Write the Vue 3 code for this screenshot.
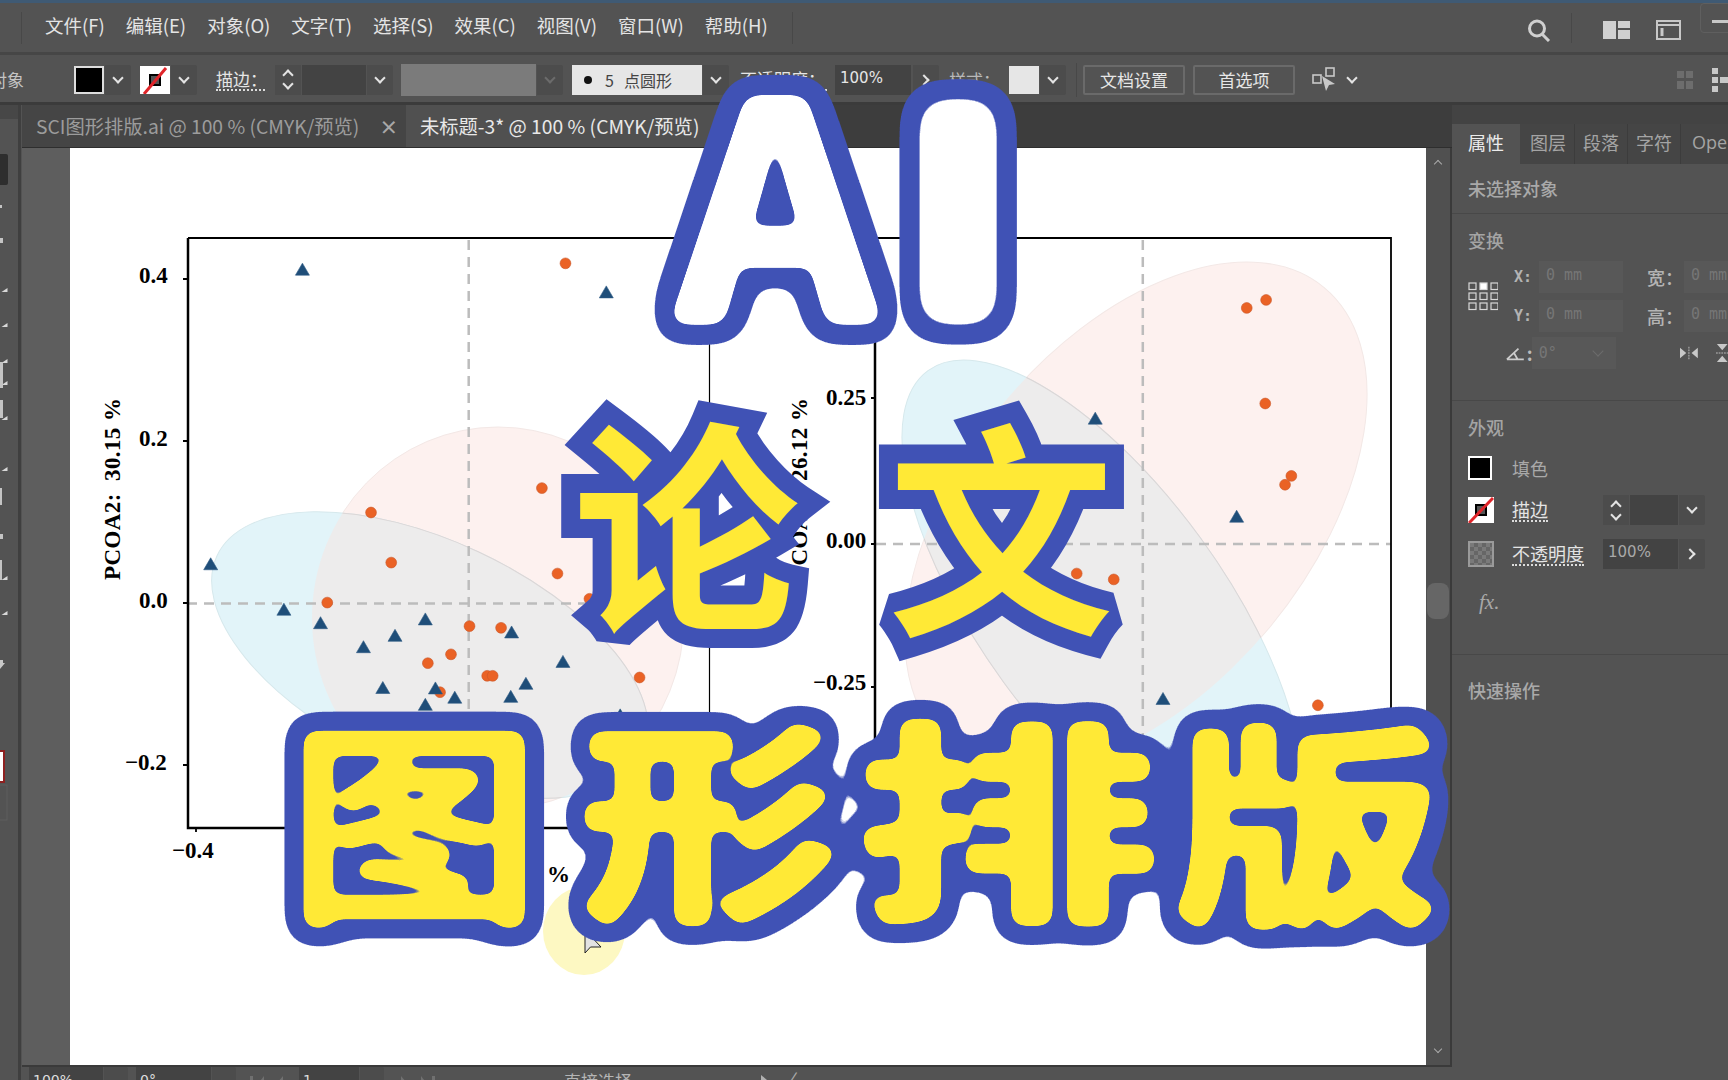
<template>
  <div class="app">
    <div class="top-line"></div>

    <header class="menubar">
      <span class="vsep first"></span>
      <nav class="menu">
        <span v-for="m in menus" :key="m">{{ m }}</span>
      </nav>
      <span class="vsep"></span>
      <div class="spacer"></div>
      <svg class="ico-search" width="26" height="23" viewBox="0 0 26 23">
        <circle cx="11" cy="9.5" r="7.5" fill="none" stroke="#d0d0d0" stroke-width="3" />
        <path d="M16 15l7 7" stroke="#d0d0d0" stroke-width="3" />
      </svg>
      <span class="vsep short"></span>
      <svg class="ico-layout" width="27" height="18" viewBox="0 0 27 18">
        <path d="M0 0h13v18H0zM15 0h12v7H15zM15 9h12v9H15z" fill="#d0d0d0" />
      </svg>
      <svg class="ico-panel" width="25" height="20" viewBox="0 0 25 20">
        <rect x="1" y="1" width="23" height="18" fill="none" stroke="#c8c8c8" stroke-width="2" />
        <path d="M1 5h23" stroke="#c8c8c8" stroke-width="2" />
        <path d="M6 8v8" stroke="#c8c8c8" stroke-width="3" />
      </svg>
      <div class="win-btn"><i></i></div>
    </header>

    <div class="controlbar">
      <span class="cut-label">对象</span>
      <div class="swatch-group">
        <span class="swatch black"></span>
        <span class="drop"><i class="chev"></i></span>
      </div>
      <div class="swatch-group gap9">
        <svg class="swatch-svg" width="30" height="28" viewBox="0 0 30 28">
          <rect width="30" height="28" fill="#fff" />
          <rect x="10" y="9" width="10" height="10" fill="#555" stroke="#000" stroke-width="2" />
          <path d="M4 28L26 2" stroke="#e0252a" stroke-width="3" />
        </svg>
        <span class="drop"><i class="chev"></i></span>
      </div>
      <span class="dotted lbl-stroke">描边：</span>
      <div class="stepper">
        <span class="spin"><i class="chev up"></i><i class="chev"></i></span>
        <span class="field w64"></span>
        <span class="drop"><i class="chev"></i></span>
      </div>
      <span class="gray-box"></span>
      <span class="drop off"><i class="chev"></i></span>
      <div class="brush"><i class="dot"></i><span>5</span><span>点圆形</span></div>
      <span class="drop"><i class="chev"></i></span>
      <span class="dotted lbl-opacity">不透明度：</span>
      <span class="field pct">100%</span>
      <span class="drop narrow"><i class="chev right"></i></span>
      <span class="lbl-style">样式：</span>
      <span class="swatch light"></span>
      <span class="drop"><i class="chev"></i></span>
      <span class="vsep bar"></span>
      <button class="btn b1">文档设置</button>
      <button class="btn b2">首选项</button>
      <svg class="ico-arrange" width="26" height="26" viewBox="0 0 26 26">
        <rect x="1" y="8" width="8" height="8" fill="none" stroke="#c8c8c8" stroke-width="1.6" />
        <rect x="14" y="1" width="8" height="8" fill="none" stroke="#c8c8c8" stroke-width="1.6" />
        <path d="M10 9l13 8-6 1-3 6z" fill="#c8c8c8" />
      </svg>
      <i class="chev arrange-chev"></i>
      <div class="spacer"></div>
      <svg width="16" height="18" viewBox="0 0 16 18" class="ico-grid">
        <path d="M0 0h7v7H0zM9 0h7v7H9zM0 10h7v8H0zM9 10h7v8H9z" fill="#6d6d6d" />
      </svg>
      <svg width="16" height="24" viewBox="0 0 16 24" class="ico-dist">
        <path d="M0 0h6v6H0zM0 9h6v6H0zM0 18h6v6H0zM8 9h8v6H8z" fill="#c8c8c8" />
      </svg>
    </div>

    <div class="workspace">
      <aside class="toolbar">
        <!-- only the right edge of the tools shows, the window is cut off here -->
        <svg width="18" height="975" viewBox="0 105 18 975">
          <rect x="0" y="105" width="18" height="14" fill="#474747" />
          <rect x="-4" y="154" width="12" height="31" rx="2" fill="#2e2e2e" />
          <path v-for="c in toolCorners" :key="c" :d="`M7.500 ${c}l-6 4h6z`" fill="#d8d8d8" />
          <rect v-for="b in toolBars" :key="b[0]" x="0" :y="b[0]" :width="b[2]" :height="b[1]" fill="#c4c4c4" />
          <path d="M0 660h3v3h2l-5 6z" fill="#c8c8c8" />
          <rect x="-3" y="751" width="7" height="31" fill="#fff" stroke="#8e2020" stroke-width="2" />
          <rect x="-3" y="785" width="10" height="35" fill="none" stroke="#5e5e5e" />
        </svg>
      </aside>

      <section class="doc">
        <div class="tabs">
          <div class="tab">
            <span>SCI图形排版.ai @ 100 % (CMYK/预览)</span>
            <b class="close">×</b>
          </div>
          <div class="tab active">未标题-3* @ 100 % (CMYK/预览)</div>
        </div>

        <div class="canvas-row">
          <div class="pasteboard"></div>
          <div class="page">
            <svg class="plots" width="1356" height="917" viewBox="70 148 1356 917">
              <defs>
                <clipPath id="leftPink"><ellipse cx="498" cy="618" rx="186" ry="191" /></clipPath>
                <clipPath id="rightPink"><ellipse cx="1136" cy="516" rx="296" ry="174" transform="rotate(-50.6 1136 516)" /></clipPath>
              </defs>

              <!-- left plot -->
              <ellipse cx="498" cy="618" rx="186" ry="191" class="pink" />
              <ellipse cx="430" cy="655" rx="235" ry="114" transform="rotate(25 430 655)" class="blue" />
              <g clip-path="url(#leftPink)">
                <ellipse cx="430" cy="655" rx="235" ry="114" transform="rotate(25 430 655)" class="lens" />
              </g>
              <path d="M468.700 240V828M187 603.400H709" class="dash" />
              <path d="M709 238H188" class="frame thin" />
              <path d="M709.500 238V828" class="frame hair" />
              <path d="M188 238V828H709" class="frame" />
              <path d="M183 279h4M183 441h4M183 603h4M183 765h4M196 828v4" class="frame thin" />
              <text v-for="t in leftTicks" :key="t.s" :x="t.x" :y="t.y" class="tick">{{ t.s }}</text>
              <text x="120" y="580" class="tick pre" transform="rotate(-90 120 580)">{{ leftYLabel }}</text>
              <text x="547" y="882" class="tick">%</text>

              <!-- right plot -->
              <ellipse cx="1136" cy="516" rx="296" ry="174" transform="rotate(-50.6 1136 516)" class="pink" />
              <ellipse cx="1102" cy="610" rx="296" ry="122" transform="rotate(54 1102 610)" class="blue" />
              <g clip-path="url(#rightPink)">
                <ellipse cx="1102" cy="610" rx="296" ry="122" transform="rotate(54 1102 610)" class="lens" />
              </g>
              <path d="M1142.800 240V828M876 544H1391" class="dash" />
              <path d="M875 238H1391V828" class="frame thin" />
              <path d="M875 238V828H1391" class="frame" />
              <path d="M871 398h4M871 544h4M871 687h4" class="frame thin" />
              <text v-for="t in rightTicks" :key="t.s" :x="t.x" :y="t.y" class="tick">{{ t.s }}</text>
              <text x="807" y="580" class="tick pre" transform="rotate(-90 807 580)">{{ rightYLabel }}</text>

              <circle v-for="p in circles" :key="p.x + '-' + p.y" :cx="p.x" :cy="p.y" r="5.400" class="dot-o" />
              <path v-for="p in triangles" :key="p.x + '_' + p.y" class="tri" :d="triangle(p)" />

              <!-- pointer highlight -->
              <ellipse cx="584" cy="931" rx="41" ry="44" fill="#fdf8c2" />
              <path d="M585 930v23l5.500-6h10.500z" fill="#e2e2e2" stroke="#222" stroke-width="1" />
            </svg>
          </div>
          <div class="vscroll">
            <i class="chev up small"></i>
            <span class="thumb"></span>
            <i class="chev small end"></i>
          </div>
        </div>

        <div class="statusbar">
          <span class="st-field w74">100%</span><span class="drop st"><i class="chev"></i></span>
          <span class="st-field w75 ml8">0°</span><span class="drop st"><i class="chev"></i></span>
          <span class="st-nav">
            <svg width="36" height="15" viewBox="0 0 36 15"><path d="M0 2h3v13H0zM14 2L4 15h10zM33 2L22 15h11z" fill="#707070" /></svg>
          </span>
          <span class="st-field w60">1</span><span class="drop st"><i class="chev"></i></span>
          <span class="st-nav nav2">
            <svg width="34" height="15" viewBox="0 0 34 15"><path d="M0 2l11 13H0zM20 2l10 13H20zM31 2h3v13h-3z" fill="#707070" /></svg>
          </span>
          <span class="st-tool">直接选择</span>
          <span class="st-arrow"></span>
          <span class="st-lt">〈</span>
          <span class="st-track"></span>
        </div>
      </section>

      <aside class="panel">
        <div class="panel-strip"></div>
        <div class="panel-tabs">
          <span class="ptab on">属性</span>
          <span class="ptab">图层</span>
          <span class="ptab">段落</span>
          <span class="ptab">字符</span>
          <span class="ptab last">Ope</span>
        </div>

        <div class="section none">未选择对象</div>

        <div class="section transform">
          <div class="sec-title">变换</div>
          <div class="tf-grid">
            <svg class="refpoint" width="30" height="29" viewBox="0 0 30 29">
              <rect v-for="r in refPoints" :key="r.k" :x="r.x" :y="r.y" width="7" height="6.500" :fill="r.on ? '#fff' : 'none'" stroke="#d8d8d8" stroke-width="1.200" />
            </svg>
            <div class="tf-fields">
              <div class="tf-row">
                <span class="tf-lbl">X:</span><span class="tf-input">0 mm</span>
                <span class="tf-lbl2">宽：</span><span class="tf-input r">0 mm</span>
              </div>
              <div class="tf-row">
                <span class="tf-lbl">Y:</span><span class="tf-input">0 mm</span>
                <span class="tf-lbl2">高：</span><span class="tf-input r">0 mm</span>
              </div>
            </div>
          </div>
          <div class="tf-angle">
            <svg width="21" height="15" viewBox="0 0 21 15"><path d="M1 14h19M1 14L14 2M9 7l4 7" fill="none" stroke="#ccc" stroke-width="2" /></svg>
            <span class="angle-colon">:</span>
            <span class="tf-input ang">0°<i class="chev dim"></i></span>
            <svg class="flip" width="20" height="14" viewBox="0 0 20 14"><path d="M0 1l7 6-7 6zM20 1l-7 6 7 6z" fill="#c8c8c8" /><path d="M10 0v14" stroke="#c8c8c8" stroke-dasharray="2 1" /></svg>
            <svg class="flip2" width="14" height="20" viewBox="0 0 14 20"><path d="M1 0l6 7 6-7zM1 20l6-7 6 7z" fill="#c8c8c8" /><path d="M0 10h14" stroke="#c8c8c8" stroke-dasharray="2 1" /></svg>
          </div>
        </div>

        <div class="section appear">
          <div class="sec-title">外观</div>
          <div class="ap-row r1">
            <span class="ap-fill"></span>
            <span class="ap-lbl">填色</span>
          </div>
          <div class="ap-row r2">
            <svg class="ap-svg" width="26" height="26" viewBox="0 0 26 26">
              <rect width="26" height="26" fill="#fff" />
              <rect x="8" y="8" width="10" height="10" fill="#555" stroke="#000" stroke-width="2" />
              <path d="M1 26L25 1" stroke="#e0252a" stroke-width="3" />
            </svg>
            <span class="ap-lbl dotted on">描边</span>
            <div class="stepper at-right">
              <span class="spin"><i class="chev up"></i><i class="chev"></i></span>
              <span class="field w48"></span>
              <span class="drop"><i class="chev"></i></span>
            </div>
          </div>
          <div class="ap-row r3">
            <span class="ap-opacity"></span>
            <span class="ap-lbl dotted on wide">不透明度</span>
            <div class="stepper at-right">
              <span class="field w75">100%</span>
              <span class="drop"><i class="chev right"></i></span>
            </div>
          </div>
          <div class="fx">fx.</div>
        </div>

        <div class="section quick">快速操作</div>
      </aside>
    </div>

    <svg class="title" width="1728" height="1080" viewBox="0 0 1728 1080">
      <defs>
        <filter id="blobAi" x="-30%" y="-30%" width="160%" height="160%" color-interpolation-filters="sRGB">
          <feGaussianBlur in="SourceAlpha" stdDeviation="8" result="b" />
          <feComponentTransfer in="b" result="core"><feFuncA type="linear" slope="30" intercept="-9" /></feComponentTransfer>
          <feMorphology in="core" operator="dilate" radius="10" result="fat" />
          <feGaussianBlur in="fat" stdDeviation="11" />
          <feComponentTransfer result="ring"><feFuncA type="linear" slope="40" intercept="-6.500" /></feComponentTransfer>
          <feFlood flood-color="#4052b5" /><feComposite in2="ring" operator="in" result="blueOut" />
          <feFlood flood-color="#ffffff" /><feComposite in2="core" operator="in" result="fillIn" />
          <feMerge><feMergeNode in="blueOut" /><feMergeNode in="fillIn" /></feMerge>
        </filter>
        <filter id="blobI" x="-80%" y="-30%" width="260%" height="160%" color-interpolation-filters="sRGB">
          <feGaussianBlur in="SourceAlpha" stdDeviation="14" result="b" />
          <feComponentTransfer in="b" result="core"><feFuncA type="linear" slope="30" intercept="-9" /></feComponentTransfer>
          <feMorphology in="core" operator="dilate" radius="10" result="fat" />
          <feGaussianBlur in="fat" stdDeviation="11" />
          <feComponentTransfer result="ring"><feFuncA type="linear" slope="40" intercept="-6.500" /></feComponentTransfer>
          <feFlood flood-color="#4052b5" /><feComposite in2="ring" operator="in" result="blueOut" />
          <feFlood flood-color="#ffffff" /><feComposite in2="core" operator="in" result="fillIn" />
          <feMerge><feMergeNode in="blueOut" /><feMergeNode in="fillIn" /></feMerge>
        </filter>
        <filter id="blobYellow" x="-10%" y="-20%" width="120%" height="140%" color-interpolation-filters="sRGB">
          <feGaussianBlur in="SourceAlpha" stdDeviation="7" result="b" />
          <feComponentTransfer in="b" result="core"><feFuncA type="linear" slope="30" intercept="-9" /></feComponentTransfer>
          <feMorphology in="core" operator="dilate" radius="9" result="fat" />
          <feGaussianBlur in="fat" stdDeviation="11" />
          <feComponentTransfer result="ring"><feFuncA type="linear" slope="40" intercept="-6.500" /></feComponentTransfer>
          <feFlood flood-color="#4052b5" /><feComposite in2="ring" operator="in" result="blueOut" />
          <feFlood flood-color="#ffe936" /><feComposite in2="core" operator="in" result="fillIn" />
          <feMerge><feMergeNode in="blueOut" /><feMergeNode in="fillIn" /></feMerge>
        </filter>
      </defs>
      <g filter="url(#blobAi)">
        <text class="big round" font-size="300" transform="translate(776 321) scale(1.050 1)">A</text>
      </g>
      <g filter="url(#blobI)">
        <text class="big" font-size="285" transform="translate(958 318) scale(1.250 1)">I</text>
      </g>
      <text x="686" y="615" class="big hard" font-size="226">论</text>
      <text x="1001" y="618" class="big hard" font-size="226">文</text>
      <g filter="url(#blobYellow)">
        <text v-for="c in cartoon" :key="c.s" :class="['big', c.weight]" font-size="238" :transform="`translate(${c.x} ${c.y}) scale(${c.sx} 0.9)`">{{ c.s }}</text>
      </g>
    </svg>
  </div>
</template>

<script setup>
const menus = ["文件(F)", "编辑(E)", "对象(O)", "文字(T)", "选择(S)", "效果(C)", "视图(V)", "窗口(W)", "帮助(H)"]

const leftYLabel = "PCOA2:  30.15 %"
const rightYLabel = "PCOA2:  26.12 %"

const toolCorners = [288, 323, 359, 381, 416, 467, 576, 611]
const toolBars = [
  [205, 3, 2],
  [238, 5, 3],
  [362, 26, 3],
  [400, 18, 3],
  [488, 17, 2],
  [534, 5, 3],
  [560, 20, 2],
]

// coordinates read off the zoomed crops, k = crop scale
const k = 2.376
const fromCrop = (ox, oy) => ([x, y]) => ({ x: ox + x / k, y: oy + y / k })
const left = fromCrop(60, 220)
const right = fromCrop(780, 220)

const triangles = [
  ...[[576, 118], [1298, 172], [358, 818], [532, 926], [619, 958], [721, 1015], [796, 988], [868, 949], [1073, 980],
    [1195, 1050], [1107, 1102], [1071, 1133], [767, 1112], [892, 1113], [938, 1135], [868, 1152], [1331, 1177]].map(left),
  ...[[749, 472], [1085, 705], [910, 1138]].map(right),
]

const circles = [
  ...[[1201, 103], [1145, 637], [739, 695], [787, 814], [635, 909], [1182, 840], [1258, 900], [973, 965], [1048, 969],
    [929, 1032], [874, 1053], [1015, 1083], [1028, 1083], [903, 1122], [1377, 1087], [1262, 1212]].map(left),
  ...[[1109, 209], [1155, 190], [1153, 436], [1215, 608], [1200, 629], [705, 840], [793, 854], [1278, 1153]].map(right),
]

function triangle(p) {
  return `M${p.x} ${p.y - 6.5}L${p.x + 7} ${p.y + 5.5}H${p.x - 7}Z`
}

const leftTicks = [
  { s: "0.4", x: 139, y: 283 },
  { s: "0.2", x: 139, y: 446 },
  { s: "0.0", x: 139, y: 608 },
  { s: "−0.2", x: 125, y: 770 },
  { s: "−0.4", x: 172, y: 858 },
]

const rightTicks = [
  { s: "0.25", x: 826, y: 405 },
  { s: "0.00", x: 826, y: 548 },
  { s: "−0.25", x: 813, y: 690 },
]

const refPoints = []
for (let r = 0; r < 3; r++) {
  for (let c = 0; c < 3; c++) {
    refPoints.push({ k: r + "-" + c, x: 1 + c * 11, y: 1 + r * 10, on: r === 0 && c === 1 })
  }
}

const cartoon = [
  { s: "图", x: 414, y: 906, sx: 1.07, weight: "mid" },
  { s: "形", x: 710, y: 904, sx: 1.1, weight: "round" },
  { s: "排", x: 1008, y: 904, sx: 1.28, weight: "round" },
  { s: "版", x: 1307, y: 908, sx: 1.14, weight: "round" },
]
</script>

<style>
html, body {
  margin: 0;
  background: #535353;
  overflow: hidden;
}
</style>

<style scoped>
.app {
  position: relative;
  width: 1728px;
  height: 1080px;
  overflow: hidden;
  display: flex;
  flex-direction: column;
  background: #535353;
  color: #e6e6e6;
  font-family: "Noto Sans CJK SC", "Liberation Sans", sans-serif;
  font-size: 17px;
}
.top-line {
  height: 3px;
  background: #3f5a74;
  flex: none;
}
.spacer {
  flex: 1;
}
.menubar {
  height: 49px;
  display: flex;
  align-items: center;
  background: #535353;
  border-bottom: 3px solid #464646;
  flex: none;
}
.vsep {
  width: 1px;
  height: 32px;
  background: #484848;
  flex: none;
}
.vsep.first {
  margin-left: 21px;
}
.vsep.short {
  margin: 0 31px 0 19px;
  height: 30px;
}
.menu {
  display: flex;
  gap: 21px;
  margin: -6px 24px 0 23px;
  font-size: 18.5px;
  color: #e4e4e4;
  white-space: nowrap;
}
.ico-search {
  margin-top: 5px;
}
.ico-panel {
  margin-left: 26px;
  margin-top: 5px;
}
.ico-layout {
  margin-top: 5px;
}
.win-btn {
  width: 40px;
  height: 30px;
  margin: -20px -12px 0 19px;
  border: 1px solid #5f5f5f;
  border-radius: 4px 0 0 4px;
  box-sizing: border-box;
  padding: 16px 0 0 11px;
  flex: none;
}
.win-btn i {
  display: block;
  height: 3px;
  background: #c8c8c8;
}

.controlbar {
  height: 45px;
  padding-top: 2px;
  display: flex;
  align-items: center;
  background: #535353;
  border-bottom: 3px solid #3b3b3b;
  font-size: 17px;
  flex: none;
}
.cut-label {
  margin-left: -10px;
  width: 35px;
  color: #c4c4c4;
  white-space: nowrap;
}
.swatch-group {
  display: flex;
  align-items: center;
  margin-left: 49px;
}
.swatch-group.gap9 {
  margin-left: 9px;
}
.swatch {
  width: 30px;
  height: 28px;
  box-sizing: border-box;
}
.swatch.black {
  background: #000;
  border: 2px solid #ddd;
}
.swatch.light {
  background: #e6e6e6;
  margin-left: 12px;
}
.swatch-svg {
  display: block;
}
.drop {
  width: 26px;
  height: 30px;
  margin-left: 1px;
  background: #4c4c4c;
  border-radius: 0 2px 2px 0;
  display: flex;
  align-items: center;
  justify-content: center;
  flex: none;
}
.drop.off i {
  border-color: #6c6c6c;
}
.drop.narrow {
  margin-left: 2px;
}
.chev {
  display: block;
  width: 6px;
  height: 6px;
  border-right: 2px solid #e4e4e4;
  border-bottom: 2px solid #e4e4e4;
  transform: translateY(-2px) rotate(45deg);
}
.chev.up {
  transform: translateY(2px) rotate(-135deg);
}
.chev.right {
  transform: translateX(-2px) rotate(-45deg);
}
.chev.small {
  width: 5px;
  height: 5px;
  border-width: 1px;
  border-color: #aaa;
  flex: none;
}
.chev.end {
  margin-top: auto;
}
.chev.dim {
  border-color: #6c6c6c;
  border-width: 1px;
  width: 7px;
  height: 7px;
}
.dotted {
  border-bottom: 2px dotted #dcdcdc;
  line-height: 21px;
}
.lbl-stroke {
  margin-left: 19px;
  width: 49px;
  color: #e6e6e6;
  white-space: nowrap;
}
.stepper {
  display: flex;
  align-items: center;
  height: 30px;
}
.controlbar .stepper {
  margin-left: 10px;
}
.spin {
  width: 26px;
  height: 30px;
  background: #4c4c4c;
  display: flex;
  flex-direction: column;
  align-items: center;
  justify-content: center;
  gap: 5px;
  margin-right: 1px;
}
.field {
  height: 30px;
  background: #434343;
  display: block;
  font-size: 15px;
  line-height: 26px;
  padding-left: 5px;
  box-sizing: border-box;
  font-family: "DejaVu Sans", sans-serif;
}
.w64 {
  width: 64px;
}
.w48 {
  width: 48px;
}
.w75 {
  width: 75px;
}
.gray-box {
  width: 135px;
  height: 32px;
  background: #7b7b7b;
  margin-left: 8px;
}
.brush {
  width: 130px;
  height: 30px;
  margin-left: 9px;
  background: #e6e6e6;
  color: #444;
  display: flex;
  align-items: center;
  font-size: 16px;
  box-sizing: border-box;
  padding-left: 12px;
  gap: 10px;
}
.brush .dot {
  width: 8px;
  height: 8px;
  border-radius: 50%;
  background: #111;
  margin-right: 3px;
}
.lbl-opacity {
  margin-left: 11px;
  width: 87px;
  white-space: nowrap;
}
.field.pct {
  width: 76px;
  margin-left: 8px;
}
.lbl-style {
  margin-left: 10px;
  color: #b8b8b8;
  width: 48px;
  white-space: nowrap;
}
.vsep.bar {
  margin: 0 6px 0 10px;
  height: 34px;
}
.btn {
  height: 30px;
  background: #535353;
  border: 2px solid #6a6a6a;
  border-radius: 2px;
  color: #e6e6e6;
  font: inherit;
  font-size: 17px;
  padding: 0;
  line-height: 24px;
}
.b1 {
  width: 102px;
}
.b2 {
  width: 102px;
  margin-left: 8px;
}
.ico-arrange {
  margin-left: 17px;
}
.arrange-chev {
  margin-left: 10px;
}
.ico-grid {
  margin-right: 19px;
}

.workspace {
  flex: 1;
  display: flex;
  min-height: 0;
}
.toolbar {
  width: 18px;
  background: #535353;
  border-right: 3px solid #3f3f3f;
  flex: none;
  overflow: hidden;
  margin-right: 1px;
}
.toolbar svg {
  display: block;
}
.doc {
  width: 1430px;
  display: flex;
  flex-direction: column;
  flex: none;
  min-height: 0;
  overflow: hidden;
}
.tabs {
  height: 43px;
  display: flex;
  background: #3d3d3d;
  border-bottom: 1px solid #2e2e2e;
  box-sizing: border-box;
  flex: none;
  font-size: 19.3px;
}
.tab {
  width: 384px;
  background: #454545;
  color: #9c9c9c;
  display: flex;
  align-items: center;
  padding-left: 14px;
  box-sizing: border-box;
  white-space: nowrap;
}
.tab .close {
  margin-left: 20px;
  font-weight: 700;
  font-size: 19px;
  color: #a8a8a8;
}
.tab.active {
  width: 340px;
  background: #505050;
  color: #e8e8e8;
}
.canvas-row {
  height: 917px;
  display: flex;
  flex: none;
}
.pasteboard {
  width: 48px;
  background: #5e5e5e;
  flex: none;
}
.page {
  width: 1356px;
  height: 917px;
  background: #fff;
  flex: none;
}
.plots {
  display: block;
}
.vscroll {
  width: 26px;
  background: #505050;
  display: flex;
  flex-direction: column;
  align-items: center;
  padding: 11px 0;
  box-sizing: border-box;
  border-right: 2px solid #3a3a3a;
  flex: none;
}
.thumb {
  width: 22px;
  height: 36px;
  background: #666;
  border-radius: 8px;
  margin-top: 418px;
  flex: none;
}
.pink {
  fill: #fdf1ef;
  stroke: #f3e8e6;
  stroke-width: 1;
}
.blue {
  fill: #e2f4f9;
  stroke: #d6e8ec;
  stroke-width: 1;
}
.lens {
  fill: #edecec;
  stroke: #dcd6d6;
  stroke-width: 1;
}
.dash {
  fill: none;
  stroke: #bcbcbc;
  stroke-width: 2.5;
  stroke-dasharray: 10 7;
}
.frame {
  fill: none;
  stroke: #000;
  stroke-width: 2.5;
}
.frame.thin {
  stroke-width: 1.8;
}
.frame.hair {
  stroke-width: 1.2;
}
.tick {
  font-family: "Liberation Serif", serif;
  font-weight: 700;
  font-size: 23px;
  fill: #000;
}
.tick.pre {
  white-space: pre;
  letter-spacing: 0.4px;
}
.dot-o {
  fill: #ea6225;
  stroke: #c9572a;
  stroke-width: 0.6;
}
.tri {
  fill: #1f4e79;
  stroke: #2d5a85;
  stroke-width: 0.6;
}

.statusbar {
  height: 30px;
  display: flex;
  background: #535353;
  border-top: 2px solid #3a3a3a;
  box-sizing: border-box;
  padding-left: 7px;
  flex: none;
  color: #ddd;
}
.st-field {
  height: 30px;
  background: #434343;
  padding-left: 4px;
  box-sizing: border-box;
  font-family: "DejaVu Sans", sans-serif;
  font-size: 14px;
  line-height: 26px;
  display: block;
}
.w74 {
  width: 74px;
}
.w60 {
  width: 60px;
}
.ml8 {
  margin-left: 8px;
}
.drop.st {
  height: 30px;
  width: 24px;
  padding-top: 4px;
  box-sizing: border-box;
}
.st-nav {
  margin-left: 14px;
  width: 49px;
  display: block;
  padding-top: 2px;
}
.st-nav.nav2 {
  margin-left: 17px;
  width: 47px;
}
.st-tool {
  width: 300px;
  text-align: center;
  color: #b5b5b5;
  line-height: 28px;
}
.st-arrow {
  width: 0;
  height: 0;
  margin: 8px 0 0 13px;
  border-left: 12px solid #b0b0b0;
  border-top: 10px solid transparent;
  border-bottom: 10px solid transparent;
}
.st-lt {
  margin-left: 8px;
  color: #aaa;
  line-height: 26px;
}
.st-track {
  flex: 1;
}

.panel {
  flex: 1;
  min-width: 0;
  background: #535353;
  display: flex;
  flex-direction: column;
  overflow: hidden;
  color: #a9a9a9;
  font-size: 18px;
}
.panel-strip {
  height: 19px;
  background: #434343;
  flex: none;
}
.panel-tabs {
  height: 40px;
  display: flex;
  background: #454545;
  align-items: stretch;
  flex: none;
}
.ptab {
  width: 53px;
  display: flex;
  align-items: center;
  justify-content: center;
  border-right: 1px solid #3c3c3c;
  flex: none;
  color: #a4a4a4;
  padding-bottom: 5px;
  box-sizing: border-box;
}
.ptab.on {
  width: 68px;
  background: #535353;
  color: #ececec;
  border-right: none;
  margin-right: 2px;
}
.ptab.last {
  border: none;
  justify-content: flex-start;
  padding-left: 11px;
  font-family: "Open Sans", sans-serif;
  width: 60px;
}
.section {
  padding-left: 16px;
  border-bottom: 1px solid #484848;
  box-sizing: border-box;
  flex: none;
}
.none {
  height: 50px;
  line-height: 48px;
  font-weight: 500;
}
.transform {
  height: 187px;
}
.sec-title {
  font-weight: 500;
  padding-top: 13px;
  line-height: 26px;
  color: #a4a4a4;
}
.tf-grid {
  display: flex;
  align-items: center;
  margin-top: 8px;
}
.refpoint {
  flex: none;
}
.tf-fields {
  margin-left: 16px;
  display: flex;
  flex-direction: column;
  gap: 7px;
}
.tf-row {
  display: flex;
  align-items: center;
  height: 32px;
}
.tf-lbl {
  width: 25px;
  font-family: "DejaVu Sans Mono", monospace;
  font-weight: 700;
  font-size: 15px;
  color: #b4b4b4;
}
.tf-lbl2 {
  margin-left: 24px;
  width: 37px;
  font-weight: 500;
  color: #b4b4b4;
  white-space: nowrap;
}
.tf-input {
  width: 84px;
  height: 32px;
  flex: none;
  background: #585858;
  color: #767676;
  font-family: "DejaVu Sans Mono", monospace;
  font-size: 15px;
  line-height: 28px;
  padding-left: 7px;
  box-sizing: border-box;
}
.tf-input.r {
  width: 60px;
}
.tf-angle {
  display: flex;
  align-items: center;
  height: 32px;
  margin: 5px 0 0 38px;
}
.angle-colon {
  margin-left: 2px;
  width: 5px;
  font-weight: 700;
  color: #bbb;
}
.tf-input.ang {
  display: flex;
  align-items: center;
  justify-content: space-between;
  padding-right: 14px;
}
.flip {
  margin-left: 64px;
}
.flip2 {
  margin-left: 18px;
}
.appear {
  height: 254px;
}
.ap-row {
  display: flex;
  align-items: center;
  height: 32px;
}
.r1 {
  margin-top: 12px;
}
.r2 {
  margin-top: 10px;
}
.r3 {
  margin-top: 12px;
}
.ap-fill {
  width: 24px;
  height: 24px;
  background: #000;
  border: 2px solid #fff;
  box-sizing: border-box;
  flex: none;
}
.ap-svg {
  flex: none;
}
.ap-opacity {
  width: 26px;
  height: 26px;
  box-sizing: border-box;
  border: 2px solid #9a9a9a;
  background: repeating-conic-gradient(#666 0 25%, #7a7a7a 0 50%) 0 0 / 8px 8px;
  flex: none;
}
.ap-lbl {
  margin-left: 20px;
  color: #a9a9a9;
  white-space: nowrap;
}
.ap-svg + .ap-lbl,
.ap-opacity + .ap-lbl {
  margin-left: 18px;
}
.ap-lbl.on {
  color: #e4e4e4;
}
.at-right {
  margin-left: 19px;
}
.ap-lbl:not(.wide) + .at-right {
  margin-left: 55px;
}
.fx {
  margin: 20px 0 0 11px;
  font-family: "Liberation Serif", serif;
  font-style: italic;
  font-size: 21px;
  color: #a8a8a8;
}
.quick {
  border: none;
  padding-top: 22px;
  font-weight: 500;
}

.title {
  position: absolute;
  left: 0;
  top: 0;
  pointer-events: none;
}
.big {
  font-family: "Noto Sans CJK SC", "Noto Sans", sans-serif;
  font-weight: 900;
  text-anchor: middle;
  fill: #ffe936;
}
.big.round {
  font-weight: 700;
}
.big.mid {
  font-weight: 500;
}
.big.hard {
  font-weight: 700;
  stroke: #4052b5;
  stroke-width: 38px;
  stroke-linejoin: miter;
  stroke-miterlimit: 1.8;
  paint-order: stroke fill;
}
</style>
